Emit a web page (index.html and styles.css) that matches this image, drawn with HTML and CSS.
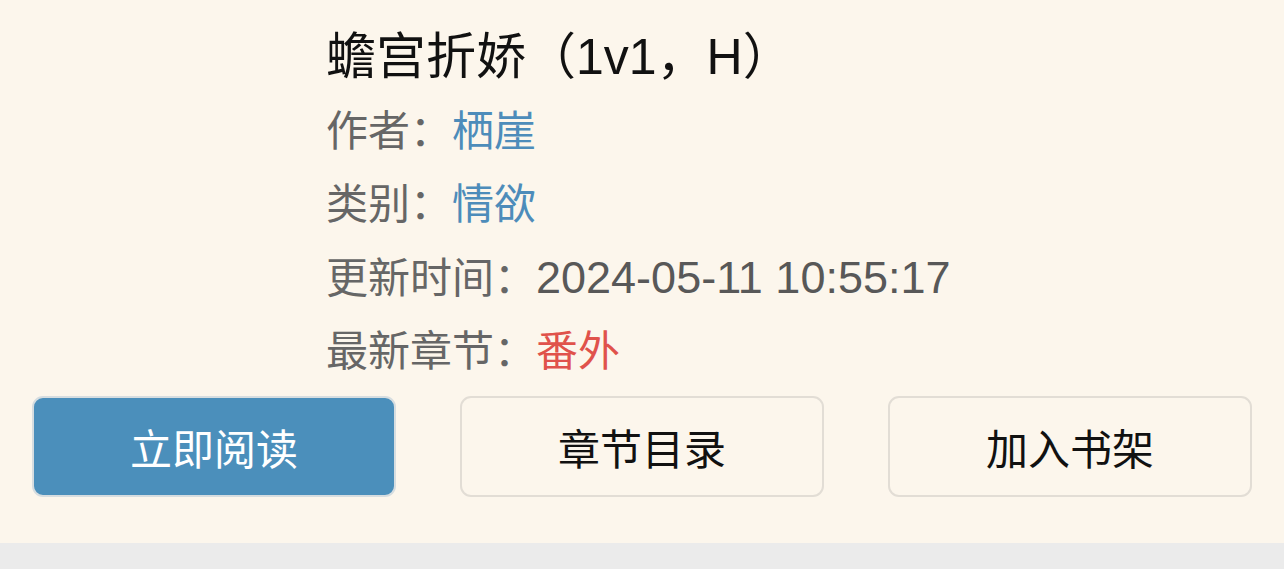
FILE: index.html
```html
<!DOCTYPE html>
<html lang="zh-CN">
<head>
<meta charset="utf-8">
<link rel="stylesheet" href="styles.css">
</head>
<body>
<div class="page">
  <div class="info">
    <h1 class="title">蟾宫折娇（1v1，H）</h1>
    <div class="row first"><span class="label">作者：</span><span class="link">栖崖</span></div>
    <div class="row"><span class="label">类别：</span><span class="link">情欲</span></div>
    <div class="row"><span class="label">更新时间：</span><span class="date">2024-05-11 10:55:17</span></div>
    <div class="row"><span class="label">最新章节：</span><span class="red">番外</span></div>
  </div>
  <div class="actions">
    <div class="btn primary">立即阅读</div>
    <div class="btn">章节目录</div>
    <div class="btn">加入书架</div>
  </div>
</div>
<div class="band"></div>
</body>
</html>
```
FILE: styles.css
```css
html, body {
  margin: 0;
  padding: 0;
  background: #fcf6ec;
  font-family: "Liberation Sans", "Noto Sans CJK SC", sans-serif;
}
.page {
  height: 543px;
  overflow: hidden;
}
.info {
  padding: 22px 0 0 326px;
}
.title {
  margin: 0;
  font-size: 50px;
  font-weight: normal;
  line-height: 70px;
  color: #111;
  white-space: nowrap;
}
.row {
  font-size: 42px;
  line-height: 73px;
  color: #666;
  white-space: nowrap;
}
.row.first {
  margin-top: 3px;
}
.link { color: #4d8cba; }
.date { color: #585858; font-size: 45px; }
.red { color: #e0524b; }
.actions {
  display: flex;
  gap: 64px;
  padding: 0 32px;
  margin-top: 8px;
}
.btn {
  flex: 1;
  height: 101px;
  box-sizing: border-box;
  border: 2px solid #e2ddd5;
  border-radius: 11px;
  display: flex;
  align-items: center;
  justify-content: center;
  font-size: 42px;
  color: #111;
  background: #fcf6ec;
}
.btn.primary {
  background: #4b8fbb;
  border-color: #d6dde0;
  color: #fff;
}
.band {
  height: 26px;
  background: #ebebeb;
}
```
